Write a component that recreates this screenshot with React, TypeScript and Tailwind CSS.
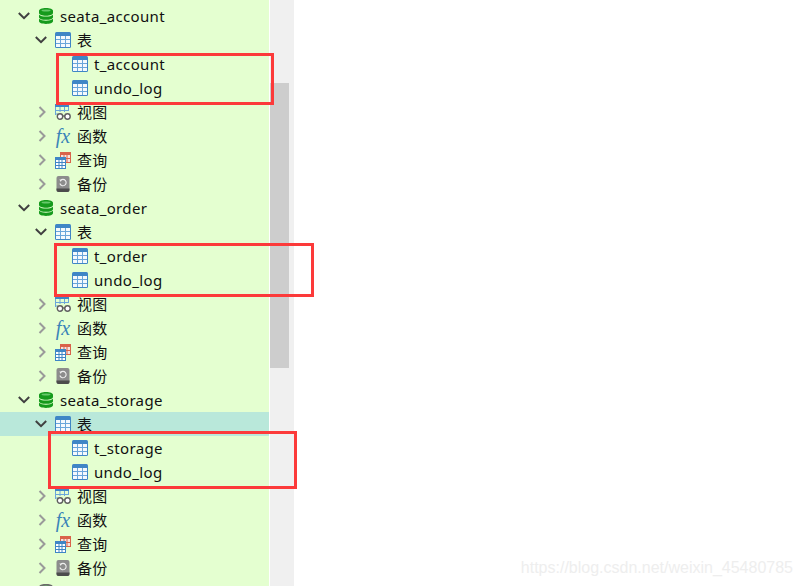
import React from 'react';

const FONT = '"Noto Sans", "Noto Sans CJK SC", sans-serif';

const DbIcon = ({ color = '#159a1c' }: { color?: string }) => (
  <svg width="16" height="16" viewBox="0 0 16 16" className="shrink-0">
    <path d="M1 3C1 1 4 0 8 0s7 1 7 3v2c0 1.700-3 2.700-7 2.700S1 6.700 1 5z" fill={color} />
    <path d="M1 6.700c1.300 1.200 4 1.900 7 1.900s5.700-.7 7-1.900v2.500c0 1.700-3 2.600-7 2.600s-7-.9-7-2.600z" fill={color} />
    <path d="M1 10.800c1.300 1.200 4 1.900 7 1.900s5.700-.7 7-1.900v2.300c0 1.900-3 2.900-7 2.900s-7-1-7-2.900z" fill={color} />
    <ellipse cx="8" cy="2.600" rx="4.500" ry="1" fill="#66c86a" />
  </svg>
);

const TableIcon = () => (
  <svg width="16" height="16" viewBox="0 0 16 16" className="shrink-0">
    <rect x="0" y="0" width="16" height="16" rx="1.500" fill="#3f86c6" />
    <rect x="1" y="4" width="14" height="11" fill="#f4f9fd" />
    <path d="M1 7.500h14M1 11.500h14M5.500 4v11M10.500 4v11" stroke="#6aa6da" strokeWidth="1" />
  </svg>
);

const ViewIcon = () => (
  <svg width="16" height="16" viewBox="0 0 16 16" className="shrink-0">
    <rect x="0" y="0" width="14" height="3" fill="#3f86c6" />
    <path d="M.5 3v8M5 3v5M9.500 3v5M13.500 3v4M0 6.500h14M0 10h3" stroke="#6aa6da" strokeWidth="1" fill="none" />
    <circle cx="5" cy="12.500" r="2.700" fill="#ffffff" stroke="#5f5f5f" strokeWidth="1.400" />
    <circle cx="12.500" cy="12.500" r="2.700" fill="#ffffff" stroke="#5f5f5f" strokeWidth="1.400" />
    <path d="M7.500 12h2.500" stroke="#5f5f5f" strokeWidth="1.300" />
  </svg>
);

const FxIcon = () => (
  <span
    className="w-4 shrink-0 text-center text-[20px] leading-none whitespace-nowrap text-[#3a84b8] italic"
    style={{ fontFamily: '"Liberation Serif", serif' }}
  >
    fx
  </span>
);

const QueryIcon = () => (
  <svg width="16" height="17" viewBox="0 0 16 17" className="shrink-0">
    <rect x="5" y="0" width="11" height="11" fill="#d9634a" />
    <rect x="6" y="3" width="9" height="7" fill="#f7e3dd" />
    <path d="M9 3v7M12 3v7M6 6.500h9" stroke="#d9634a" strokeWidth="1" />
    <rect x="0" y="5" width="11" height="12" fill="#3f86c6" />
    <rect x="1" y="8" width="9" height="8" fill="#ffffff" />
    <path d="M4 8v8M7 8v8M1 10.500h9M1 13.500h9" stroke="#3f86c6" strokeWidth="1" />
  </svg>
);

const BackupIcon = () => (
  <svg width="16" height="16" viewBox="0 0 16 16" className="shrink-0">
    <rect x="1.500" y="0" width="13" height="16" rx="2" fill="#8c8c8c" />
    <path d="M1.500 12.500h13V14a2 2 0 0 1-2 2h-9a2 2 0 0 1-2-2z" fill="#4c4c4c" />
    <path d="M5.500 4.500a3.200 3.200 0 1 1-.6 3" fill="none" stroke="#eeeeee" strokeWidth="1.100" />
    <path d="M4.300 3.600l2.400.2-.9 2.200z" fill="#eeeeee" />
  </svg>
);

const Chevron = ({ open }: { open: boolean }) => (
  <svg width="12" height="12" viewBox="0 0 12 12" className="shrink-0">
    {open ? (
      <path d="M.8 3L6 8.200 11.200 3" fill="none" stroke="#404040" strokeWidth="2" />
    ) : (
      <path d="M4.500 1l5 5-5 5" fill="none" stroke="#9a9a9a" strokeWidth="2" />
    )}
  </svg>
);

const Row = ({
  indent,
  chevron,
  icon,
  label,
  selected,
}: {
  indent: string;
  chevron?: 'open' | 'closed';
  icon: React.ReactNode;
  label: string;
  selected?: boolean;
}) => (
  <div className={`flex h-6 items-center ${indent} ${selected ? 'bg-[#b9e8da]' : ''}`}>
    {chevron ? <Chevron open={chevron === 'open'} /> : null}
    <span className="ml-[8px] flex w-[16px] shrink-0 items-center justify-center">{icon}</span>
    <span className="ml-[6px] text-[15px] leading-6 tracking-[0.35px] whitespace-nowrap text-[#111111]">{label}</span>
  </div>
);

const Database = ({ name, table, selected }: { name: string; table: string; selected?: boolean }) => (
  <>
    <Row indent="pl-[18px]" chevron="open" icon={<DbIcon />} label={name} />
    <Row indent="pl-[35px]" chevron="open" icon={<TableIcon />} label="表" selected={selected} />
    <Row indent="pl-[64px]" icon={<TableIcon />} label={table} />
    <Row indent="pl-[64px]" icon={<TableIcon />} label="undo_log" />
    <Row indent="pl-[35px]" chevron="closed" icon={<ViewIcon />} label="视图" />
    <Row indent="pl-[35px]" chevron="closed" icon={<FxIcon />} label="函数" />
    <Row indent="pl-[35px]" chevron="closed" icon={<QueryIcon />} label="查询" />
    <Row indent="pl-[35px]" chevron="closed" icon={<BackupIcon />} label="备份" />
  </>
);

export default function App() {
  return (
    <div className="relative flex h-[586px] w-[802px] overflow-hidden bg-white" style={{ fontFamily: FONT }}>
      <div className="h-full w-[269px] shrink-0 overflow-hidden bg-[#e4ffd0] pt-1">
        <Database name="seata_account" table="t_account" />
        <Database name="seata_order" table="t_order" />
        <Database name="seata_storage" table="t_storage" selected />
        <div className="flex h-6 items-center pl-[38px]">
          <DbIcon color="#6b6b6b" />
        </div>
      </div>
      <div className="ml-px h-full w-[24px] shrink-0 bg-[#f0f0f0] pt-[83px]">
        <div className="h-[285px] w-[19px] bg-[#cdcdcd]" />
      </div>

      {/* annotation boxes drawn over the tree */}
      <div className="absolute top-[53px] left-[56px] h-[52px] w-[218px] border-[3px] border-[#fc3a3a]" />
      <div className="absolute top-[243px] left-[54px] h-[54px] w-[260px] border-[3px] border-[#fc3a3a]" />
      <div className="absolute top-[431px] left-[48px] h-[58px] w-[249px] border-[3px] border-[#fc3a3a]" />

      <div
        className="absolute right-[9px] bottom-[8px] text-[16px] leading-5 text-[#eeeeee]"
        style={{ fontFamily: '"Liberation Sans", sans-serif' }}
      >
        https://blog.csdn.net/weixin_45480785
      </div>
    </div>
  );
}
